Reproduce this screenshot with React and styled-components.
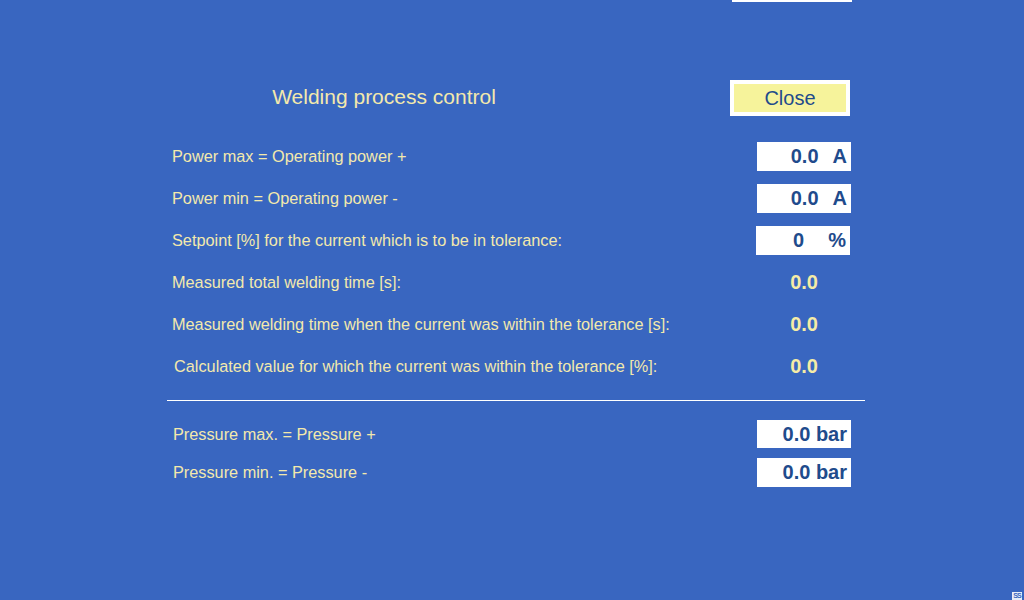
import React from "react";
import styled, { createGlobalStyle } from "styled-components";

const GlobalStyle = createGlobalStyle`
  html, body {
    margin: 0;
    padding: 0;
    background: #3966c0;
  }
  body {
    font-family: "Liberation Sans", Arial, sans-serif;
  }
`;

const Screen = styled.div`
  position: relative;
  width: 1024px;
  height: 600px;
  overflow: hidden;
  background: #3966c0;
  display: flex;
  flex-direction: column;
`;

const TopEdge = styled.div`
  margin-left: 732px;
  width: 120px;
  height: 2px;
  background: #ffffff;
`;

const Header = styled.div`
  display: flex;
  align-items: center;
  margin-top: 78px;
  height: 36px;
`;

const Title = styled.div`
  width: 768px;
  text-align: center;
  color: #f3e9ac;
  font-size: 21px;
  line-height: 36px;
  margin-top: -3px;
`;

const CloseButton = styled.button`
  margin-left: -38px;
  width: 120px;
  height: 36px;
  border: 4px solid #ffffff;
  background: #f6f39b;
  color: #1f4b8c;
  font-family: "Liberation Sans", Arial, sans-serif;
  font-size: 20px;
  padding: 0;
  line-height: 28px;
  cursor: pointer;
`;

const Section = styled.div`
  display: flex;
  flex-direction: column;
  margin-top: ${(p) => p.$top}px;
  margin-left: 167px;
  width: 698px;
`;

const Row = styled.div`
  display: flex;
  align-items: center;
  height: ${(p) => p.$h}px;
`;

const Label = styled.div`
  flex: 1;
  padding-left: ${(p) => p.$indent || 5}px;
  color: #f3e9ac;
  font-size: 16.3px;
`;

const Field = styled.div`
  display: flex;
  align-items: center;
  justify-content: flex-end;
  margin-right: ${(p) => p.$mr || 14}px;
  width: 94px;
  height: ${(p) => p.$hh || 29}px;
  background: #ffffff;
  color: #1f4b8c;
  font-size: 20px;
  font-weight: bold;
  padding-right: 4px;
  box-sizing: border-box;
`;

const Unit = styled.span`
  margin-left: ${(p) => p.$gap}px;
`;

const Readout = styled.div`
  width: 94px;
  margin-right: 14px;
  padding-right: 33px;
  box-sizing: border-box;
  text-align: right;
  color: #f5eca6;
  font-size: 20px;
  font-weight: bold;
`;

const Divider = styled.div`
  height: 1px;
  background: #ffffff;
  margin-top: 13px;
`;

const Badge = styled.div`
  position: absolute;
  right: 2px;
  bottom: 0;
  width: 10px;
  height: 8px;
  background: #e8eef8;
  color: #3966c0;
  font-size: 7px;
  line-height: 8px;
  font-weight: bold;
  text-align: center;
  letter-spacing: -1px;
`;

const App = () => {
  return (
    <Screen>
      <GlobalStyle />
      <TopEdge />
      <Header>
        <Title>Welding process control</Title>
        <CloseButton>Close</CloseButton>
      </Header>

      <Section $top={19}>
        <Row $h={42}>
          <Label>Power max = Operating power +</Label>
          <Field>
            0.0<Unit $gap={14}>A</Unit>
          </Field>
        </Row>
        <Row $h={42}>
          <Label>Power min = Operating power -</Label>
          <Field>
            0.0<Unit $gap={14}>A</Unit>
          </Field>
        </Row>
        <Row $h={42}>
          <Label>Setpoint [%] for the current which is to be in tolerance:</Label>
          <Field $mr={15}>
            0<Unit $gap={24}>%</Unit>
          </Field>
        </Row>
        <Row $h={42}>
          <Label>Measured total welding time [s]:</Label>
          <Readout>0.0</Readout>
        </Row>
        <Row $h={42}>
          <Label>Measured welding time when the current was within the tolerance [s]:</Label>
          <Readout>0.0</Readout>
        </Row>
        <Row $h={42}>
          <Label $indent={7}>Calculated value for which the current was within the tolerance [%]:</Label>
          <Readout>0.0</Readout>
        </Row>
        <Divider />
      </Section>

      <Section $top={14}>
        <Row $h={38}>
          <Label $indent={6}>Pressure max. = Pressure +</Label>
          <Field $hh={28}>0.0 bar</Field>
        </Row>
        <Row $h={38}>
          <Label $indent={6}>Pressure min. = Pressure -</Label>
          <Field>0.0 bar</Field>
        </Row>
      </Section>

      <Badge>SS</Badge>
    </Screen>
  );
};

export default App;
